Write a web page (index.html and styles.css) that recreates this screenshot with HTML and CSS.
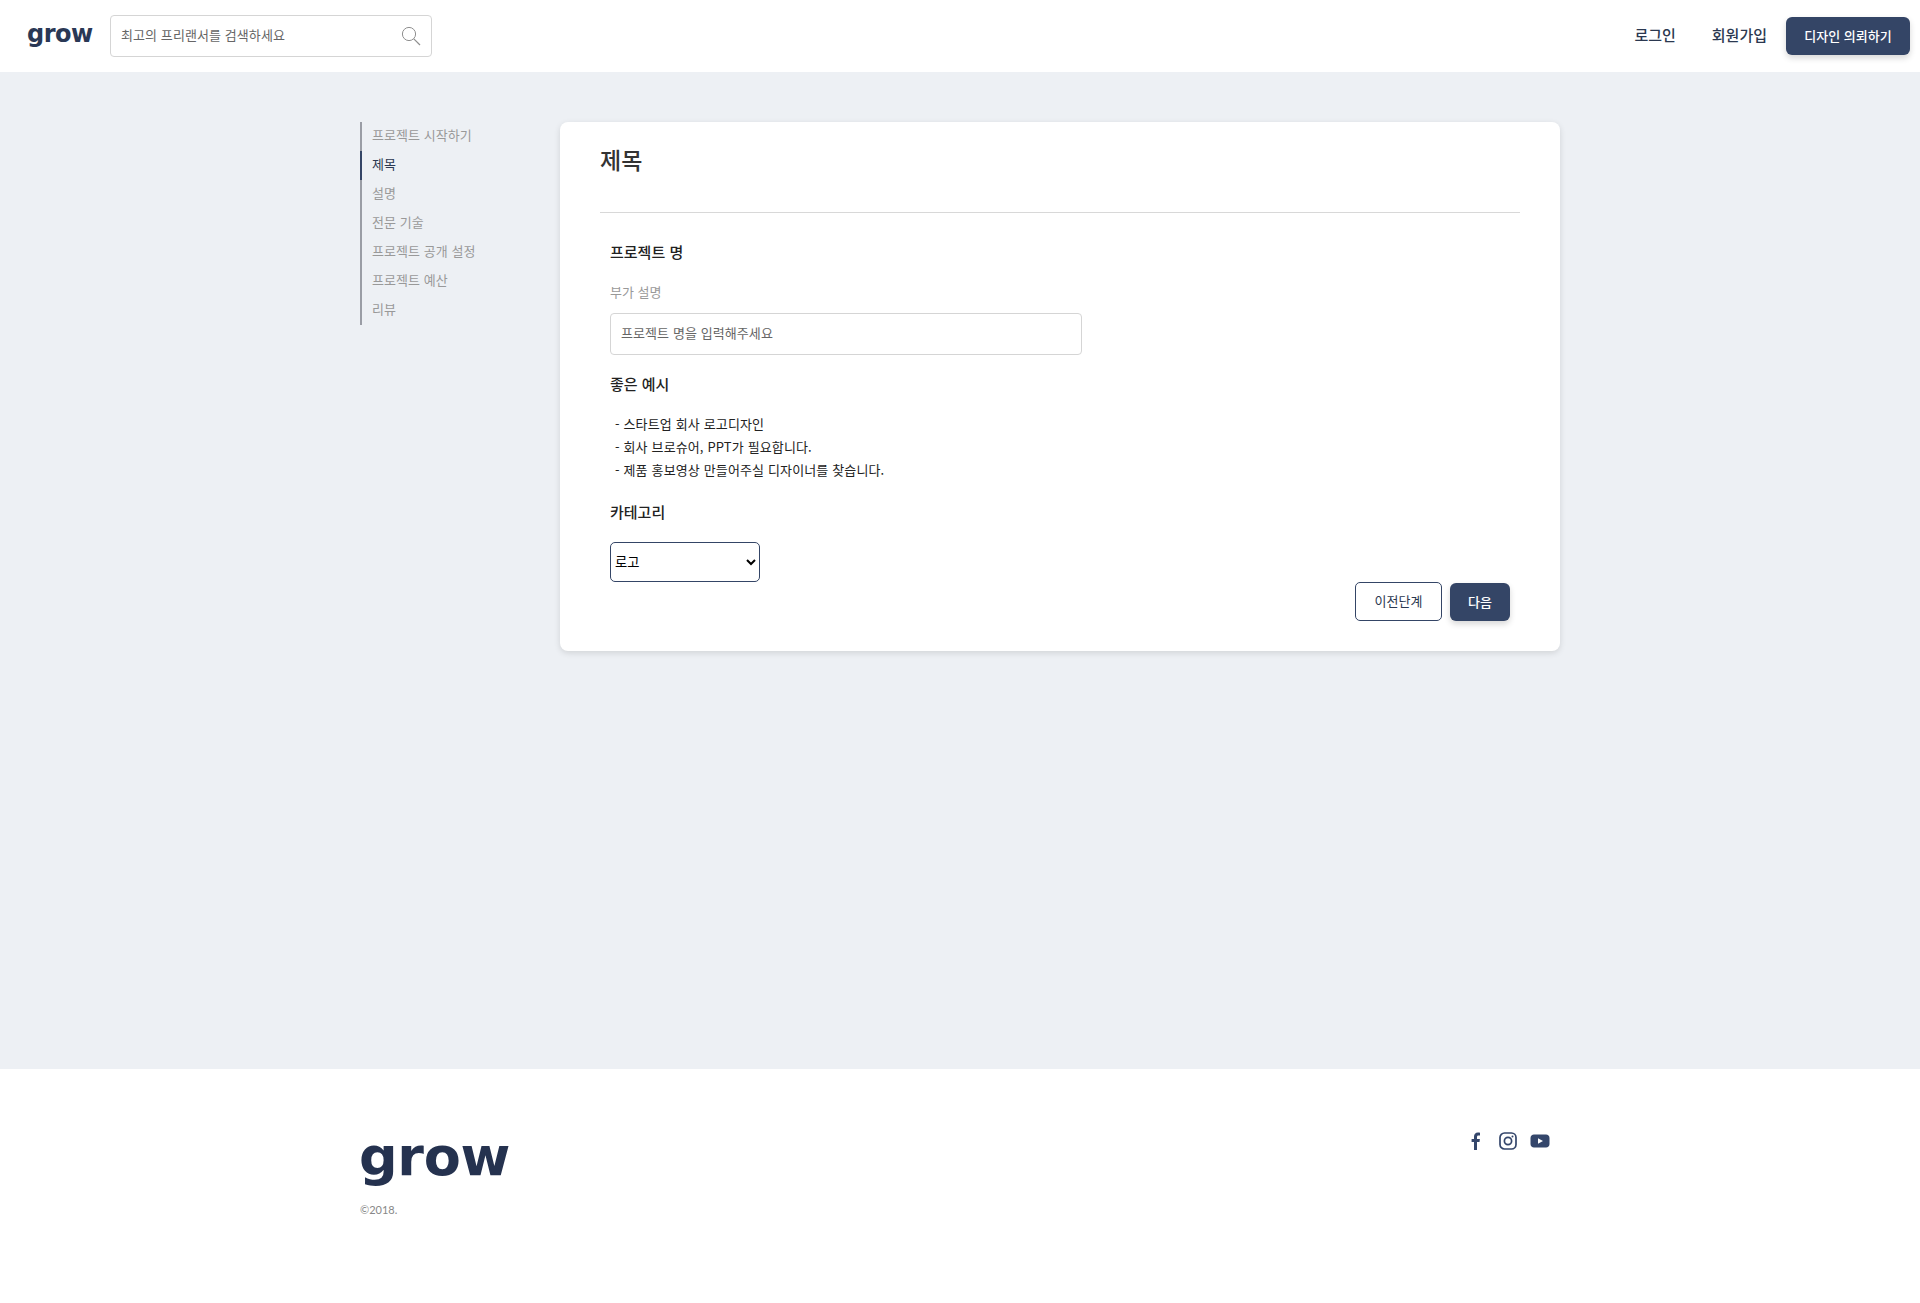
FILE: index.html
```html
<!DOCTYPE html>
<html lang="ko">
<head>
<meta charset="utf-8">
<title>grow</title>
<link rel="stylesheet" href="styles.css">
</head>
<body>
<header class="topbar">
  <div class="topbar-left">
    <a class="logo">grow</a>
    <div class="search">
      <span class="search-text">최고의 프리랜서를 검색하세요</span>
      <svg class="search-icon" viewBox="0 0 20 20" width="20" height="20"><circle cx="8" cy="8" r="6.6" fill="none" stroke="#8f8f8f" stroke-width="1"/><path d="M12.8 12.8 19 19" stroke="#8f8f8f" stroke-width="1.2" fill="none"/></svg>
    </div>
  </div>
  <nav class="topnav">
    <a class="navlink login">로그인</a>
    <a class="navlink signup">회원가입</a>
    <a class="btn-primary request">디자인 의뢰하기</a>
  </nav>
</header>
<main class="main">
  <div class="container">
    <ul class="steps">
      <li class="step">프로젝트 시작하기</li>
      <li class="step active">제목</li>
      <li class="step">설명</li>
      <li class="step">전문 기술</li>
      <li class="step">프로젝트 공개 설정</li>
      <li class="step">프로젝트 예산</li>
      <li class="step">리뷰</li>
    </ul>
    <section class="card">
      <h1 class="card-title">제목</h1>
      <div class="card-body">
        <h2 class="label first">프로젝트 명</h2>
        <p class="hint">부가 설명</p>
        <div class="text-field">프로젝트 명을 입력해주세요</div>
        <h2 class="label example">좋은 예시</h2>
        <ul class="examples">
          <li>- 스타트업 회사 로고디자인</li>
          <li>- 회사 브로슈어, PPT가 필요합니다.</li>
          <li>- 제품 홍보영상 만들어주실 디자이너를 찾습니다.</li>
        </ul>
        <h2 class="label category">카테고리</h2>
        <div class="form-bottom">
          <select class="select"><option>로고</option></select>
          <div class="actions">
            <button class="btn-outline">이전단계</button>
            <button class="btn-primary next">다음</button>
          </div>
        </div>
      </div>
    </section>
  </div>
</main>
<footer class="footer">
  <div class="footer-inner">
    <div class="brand">
      <div class="footer-logo">grow</div>
      <div class="copyright">©2018.</div>
    </div>
    <div class="social">
      <svg viewBox="0 0 20 20" width="20" height="20"><path fill="#34466b" d="M8 19v-8H5.6V8H8V5.8C8 3.2 9.4 1.6 12 1.6c.9 0 1.7.1 2 .1v2.7h-1.500C11.300 4.400 11 5 11 6v2h2.900l-.4 3H11v8z"/></svg>
      <svg viewBox="0 0 20 20" width="20" height="20"><rect x="2" y="2" width="16" height="16" rx="4.500" fill="none" stroke="#34466b" stroke-width="1.700"/><circle cx="10" cy="10" r="3.600" fill="none" stroke="#34466b" stroke-width="1.700"/><circle cx="14.500" cy="5.500" r="1" fill="#34466b"/></svg>
      <svg viewBox="0 0 20 20" width="20" height="20"><path fill="#34466b" fill-rule="evenodd" d="M4 3.500h12c2 0 3.500 1.500 3.500 3.500v6c0 2-1.500 3.500-3.500 3.500H4C2 16.500.5 15 .5 13V7C.5 5 2 3.500 4 3.500zM8 7.200v5.600l5-2.800z"/></svg>
    </div>
  </div>
</footer>
</body>
</html>
```
FILE: styles.css
```css
* { box-sizing: border-box; }
html, body { margin: 0; padding: 0; }
body {
  min-height: 1303px;
  display: flex;
  flex-direction: column;
  font-family: "Noto Sans CJK KR", "Noto Sans", sans-serif;
  background: #edf0f4;
  color: #222;
}
.topbar {
  height: 72px;
  flex: none;
  background: #fff;
  display: flex;
  align-items: center;
  justify-content: space-between;
  padding: 0 10px 0 27px;
}
.topbar-left { display: flex; align-items: center; gap: 17px; }
.logo {
  font-family: "DejaVu Sans", "Noto Sans", sans-serif;
  font-weight: 700;
  font-size: 24px;
  line-height: 30px;
  letter-spacing: -0.5px;
  color: #2a3855;
  width: 66px;
  margin-top: -4px;
}
.search {
  width: 322px;
  height: 42px;
  border: 1px solid #d5d5d5;
  border-radius: 4px;
  display: flex;
  align-items: center;
  justify-content: space-between;
  padding: 0 10px;
  background: #fff;
}
.search-text { font-size: 13px; line-height: 18px; color: #666; margin-top: -2px; letter-spacing: 0.08px; }
.search-icon { display: block; }
.topnav { display: flex; align-items: center; }
.navlink { font-size: 15px; line-height: 22px; color: #2b3850; font-weight: 500; margin-top: -3px; }
.login { margin-right: 36px; }
.signup { margin-right: 19px; }
.btn-primary {
  background: #344566;
  color: #fff;
  border: 0;
  border-radius: 6px;
  font-family: inherit;
  font-weight: 500;
  box-shadow: 0 3px 6px rgba(0,0,0,.16);
}
.request {
  width: 124px;
  height: 38px;
  display: flex;
  align-items: center;
  justify-content: center;
  font-size: 13px;
  padding-bottom: 2px;
}
.main { flex: 1; padding-top: 50px; }
.container { width: 1200px; margin: 0 auto; display: flex; align-items: flex-start; }
.steps {
  list-style: none;
  margin: 0;
  padding: 0;
  width: 200px;
  flex: none;
}
.step {
  height: 29px;
  line-height: 26px;
  border-left: 2px solid #9a9da5;
  padding-left: 10px;
  font-size: 13px;
  letter-spacing: 0.06px;
  color: #999;
}
.step.active { border-left-color: #344566; color: #2b3850; }
.card {
  width: 1000px;
  height: 529px;
  background: #fff;
  border-radius: 8px;
  box-shadow: 0 2px 6px rgba(0,0,0,.12);
  padding: 0 40px;
}
.card-title {
  margin: 0;
  height: 91px;
  padding-top: 19px;
  font-size: 23px;
  line-height: 36px;
  font-weight: 500;
  color: #333;
  border-bottom: 1px solid #d8d8d8;
}
.card-body { padding: 0 10px; }
.label { margin: 0; font-size: 15px; line-height: 24px; font-weight: 500; color: #222; }
.label.first { padding-top: 27px; }
.hint { margin: 17px 0 0; font-size: 13px; line-height: 22px; color: #999; }
.text-field {
  margin-top: 10px;
  width: 472px;
  height: 42px;
  border: 1px solid #d5d5d5;
  border-radius: 4px;
  padding: 0 10px;
  font-size: 13px;
  line-height: 38px;
  letter-spacing: 0.08px;
  color: #666;
}
.label.example { margin-top: 17px; }
.examples {
  list-style: none;
  margin: 16px 0 0;
  padding: 0 0 0 5px;
  font-size: 13px;
  line-height: 23px;
  letter-spacing: 0.1px;
  word-spacing: 0.2px;
  color: #222;
}
.label.category { margin-top: 19px; }
.form-bottom { position: relative; margin-top: 18px; height: 80px; }
.select {
  display: block;
  width: 150px;
  height: 40px;
  border: 1px solid #344566;
  border-radius: 5px;
  background: #fff;
  font-family: inherit;
  font-size: 13.300px;
  padding-bottom: 2px;
  color: #000;
}
.actions {
  position: absolute;
  right: 0;
  top: 40px;
  display: flex;
  align-items: flex-end;
  gap: 8px;
}
.btn-outline {
  width: 87px;
  height: 39px;
  background: #fff;
  border: 1px solid #344566;
  border-radius: 5px;
  font-family: inherit;
  font-size: 13px;
  padding-bottom: 3px;
  color: #2b3850;
}
.next { width: 60px; height: 38px; font-size: 13px; padding-bottom: 2px; }
.footer { flex: none; height: 234px; background: #fff; }
.footer-inner {
  width: 1200px;
  margin: 0 auto;
  display: flex;
  justify-content: space-between;
  align-items: flex-start;
  padding: 58px 0 0;
}
.footer-logo {
  font-family: "DejaVu Sans", "Noto Sans", sans-serif;
  font-weight: 700;
  font-size: 54px;
  line-height: 60px;
  letter-spacing: -0.3px;
  color: #25324f;
  width: 160px;
  margin-left: -1px;
}
.copyright {
  margin-top: 15px;
  font-family: "Lato", "Noto Sans", sans-serif;
  font-size: 11px;
  line-height: 16px;
  color: #888;
}
.social { display: flex; gap: 12px; padding-right: 10px; margin-top: 4px; }
.social svg { display: block; }
```
